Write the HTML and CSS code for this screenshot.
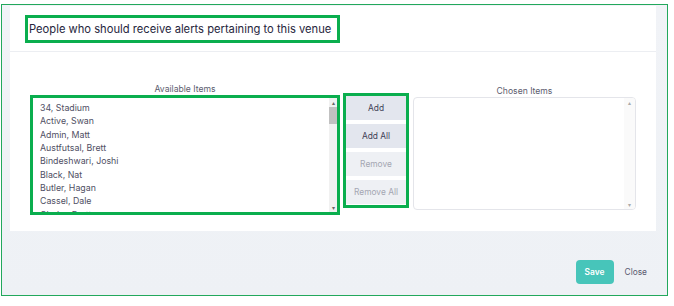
FILE: index.html
```html
<!DOCTYPE html>
<html lang="en">
<head>
  <meta charset="UTF-8">
  <title>Venue Alerts</title>
  <link rel="stylesheet" href="styles.css">
</head>
<body>

  <div class="modal">
    <div class="card">
      <div class="card-header">
        <h2 class="title marked">People who should receive alerts pertaining to this venue</h2>
      </div>

      <div class="card-body">
        <div class="dual-list">
          <div class="list-col available">
            <div class="list-label">Available Items</div>
            <div class="listbox marked">
              <ul class="items">
                <li>34, Stadium</li>
                <li>Active, Swan</li>
                <li>Admin, Matt</li>
                <li>Austfutsal, Brett</li>
                <li>Bindeshwari, Joshi</li>
                <li>Black, Nat</li>
                <li>Butler, Hagan</li>
                <li>Cassel, Dale</li>
                <li>Clarke, Brett</li>
              </ul>
              <div class="scrollbar">
                <span class="arrow">&#9652;</span>
                <div class="track"><div class="thumb"></div></div>
                <span class="arrow">&#9662;</span>
              </div>
            </div>
          </div>

          <div class="btn-col marked">
            <button class="move-btn">Add</button>
            <button class="move-btn">Add All</button>
            <button class="move-btn disabled">Remove</button>
            <button class="move-btn disabled">Remove All</button>
          </div>

          <div class="list-col chosen">
            <div class="list-label">Chosen Items</div>
            <div class="listbox plain">
              <ul class="items"></ul>
              <div class="scrollbar">
                <span class="arrow">&#9652;</span>
                <div class="track"></div>
                <span class="arrow">&#9662;</span>
              </div>
            </div>
          </div>
        </div>
      </div>
    </div>

    <div class="footer">
      <button class="save">Save</button>
      <button class="close">Close</button>
    </div>
  </div>

</body>
</html>
```

FILE: styles.css
```css
body {
  margin: 0;
  background: #fff;
  font-family: 'Inter', 'Noto Sans', sans-serif;
}

.modal {
  box-sizing: border-box;
  width: 667px;
  height: 292px;
  margin: 4px 0 0 1px;
  border: 1px solid #22a85c;
  background: linear-gradient(to bottom, #f1f3f7, #eef1f5);
  display: flex;
  flex-direction: column;
}

.marked {
  border: 3px solid #0aae4e;
  box-sizing: border-box;
}

.card {
  margin: 1px 11px 0 8px;
  background: #fff;
  height: 225px;
  box-sizing: border-box;
}

.card-header {
  height: 46px;
  box-sizing: border-box;
  padding: 9px 0 0 15px;
  border-bottom: 1px solid #eceef2;
}

.title {
  margin: 0;
  width: 315px;
  height: 28px;
  padding-left: 1px;
  font-size: 11.2px;
  font-weight: 400;
  color: #26263d;
  line-height: 22px;
  white-space: nowrap;
}

.card-body {
  padding: 31px 19px 0 20px;
}

.dual-list {
  display: flex;
  align-items: flex-start;
}

.list-col.available {
  width: 310px;
}

.list-col.chosen {
  width: 223px;
  margin-left: 4px;
  padding-top: 2px;
}

.list-label {
  text-align: center;
  font-size: 8.6px;
  color: #5c5c6e;
  height: 12px;
  line-height: 12px;
}

.listbox {
  display: flex;
  background: #fff;
  overflow: hidden;
}

.available .listbox {
  height: 120px;
}

.listbox.plain {
  height: 113px;
  border: 1px solid #e4e5ea;
  border-radius: 4px;
  box-sizing: border-box;
}

.items {
  flex: 1;
  list-style: none;
  margin: 0;
  padding: 3px 0 0 7px;
  overflow: hidden;
}

.items li {
  font-size: 8.8px;
  color: #505064;
  height: 13.35px;
  line-height: 13.35px;
  white-space: nowrap;
}

.scrollbar {
  width: 8px;
  background: #f1f1f1;
  display: flex;
  flex-direction: column;
  align-items: center;
}

.plain .scrollbar {
  width: 11px;
  background: #fafafa;
}

.arrow {
  font-size: 6px;
  color: #666;
  height: 9px;
  line-height: 9px;
}

.plain .arrow {
  color: #aaa;
}

.track {
  flex: 1;
  width: 100%;
}

.thumb {
  height: 17px;
  background: #c1c1c1;
}

.btn-col {
  width: 66px;
  margin: 10px 0 0 3px;
  height: 115px;
  display: flex;
  flex-direction: column;
  gap: 4px;
}

.move-btn {
  height: 24px;
  border: none;
  font-family: inherit;
  font-size: 8.4px;
  color: #3f3f56;
  background: #e3e6ee;
  padding: 0;
}

.move-btn.disabled {
  background: #eef0f4;
  color: #a4a6b2;
}

.footer {
  flex: 1;
  display: flex;
  justify-content: flex-end;
  align-items: flex-start;
  padding: 29px 20px 0 0;
}

.save {
  width: 38px;
  height: 24px;
  border: none;
  border-radius: 4px;
  background: #47c5ba;
  color: #fff;
  font-family: inherit;
  font-size: 8.4px;
  font-weight: 600;
  padding: 0;
}

.close {
  margin-left: 11px;
  height: 24px;
  border: none;
  background: none;
  color: #5a5a70;
  font-family: inherit;
  font-size: 8.4px;
  padding: 0;
}
```
